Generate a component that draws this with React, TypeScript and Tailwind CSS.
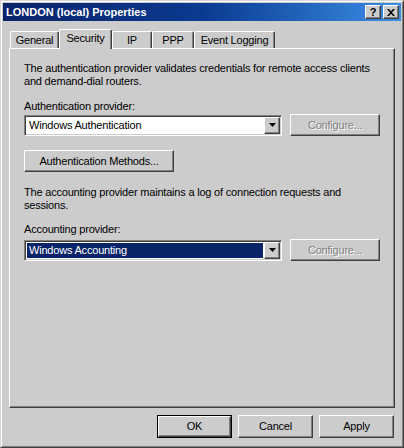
const face = "bg-[#cccccc]";

function Raised({
  children,
  className = "",
  disabled = false,
}: {
  children: React.ReactNode;
  className?: string;
  disabled?: boolean;
}) {
  return (
    <div
      className={`flex items-center justify-center border border-t-white border-l-white border-r-[#404040] border-b-[#404040] shadow-[inset_-1px_-1px_0_#808080] ${face} ${
        disabled
          ? "text-[#808080] [text-shadow:1px_1px_0_#ffffff]"
          : "text-black"
      } ${className}`}
    >
      {children}
    </div>
  );
}

function Combo({ value, selected = false }: { value: string; selected?: boolean }) {
  return (
    <div className="flex h-[21px] w-[259px] items-stretch border border-t-[#808080] border-l-[#808080] border-r-white border-b-white bg-white shadow-[inset_1px_1px_0_#404040,inset_-1px_-1px_0_#cccccc] p-[1px]">
      <div className="flex flex-1 items-center p-[1px]">
        <div
          className={`flex h-full flex-1 items-center pl-[2px] ${
            selected ? "bg-[#0a246a] text-white" : "text-black"
          }`}
        >
          {value}
        </div>
      </div>
      <Raised className="w-[16px]">
        <svg width="7" height="4" viewBox="0 0 7 4">
          <path d="M0 0h7L3.5 4z" fill="#000" />
        </svg>
      </Raised>
    </div>
  );
}

const tabs = [
  { label: "General", w: "w-[49px]" },
  { label: "Security", w: "w-[53px]", active: true },
  { label: "IP", w: "w-[40px]" },
  { label: "PPP", w: "w-[42px]" },
  { label: "Event Logging", w: "w-[81px]" },
];

export default function App() {
  return (
    <div
      className={`h-[448px] w-[404px] border border-t-[#d8d8d8] border-l-[#d8d8d8] border-r-[#404040] border-b-[#404040] ${face} text-[11px] leading-[13px] tracking-[-0.2px] text-black`}
      style={{ fontFamily: '"Liberation Sans", Arial, sans-serif' }}
    >
      <div className="flex h-full flex-col border border-t-white border-l-white border-r-[#808080] border-b-[#808080] p-[1px]">
        {/* Title bar */}
        <div className="flex h-[18px] items-center justify-between bg-gradient-to-r from-[#0a246a] via-[#0a3a90] to-[#3c8ee6] pl-[3px] pr-[2px]">
          <span className="font-bold tracking-normal text-white">LONDON (local) Properties</span>
          <div className="flex gap-[2px]">
            <Raised className="h-[14px] w-[16px] text-[11px] font-bold leading-none">?</Raised>
            <Raised className="h-[14px] w-[16px]">
              <svg width="8" height="7" viewBox="0 0 8 7">
                <path d="M0 0h2l2 2.3L6 0h2L5 3.5 8 7H6L4 4.7 2 7H0l3-3.5z" fill="#000" />
              </svg>
            </Raised>
          </div>
        </div>

        <div className="flex flex-1 flex-col px-[6px] pt-[8px]">
          {/* Tabs */}
          <div className="relative z-10 flex h-[19px] items-end pl-[1px]">
            {tabs.map((t) => (
              <div
                key={t.label}
                className={`flex ${t.w} items-center justify-center rounded-t-[2px] border-l border-t border-r border-l-white border-t-white border-r-[#404040] shadow-[inset_-1px_0_0_#808080] ${face} ${
                  t.active ? "-mb-px h-[20px] pb-[2px]" : "h-[17px] pt-[1px]"
                }`}
              >
                {t.label}
              </div>
            ))}
          </div>

          {/* Panel */}
          <div className="flex h-[360px] flex-col whitespace-nowrap border border-t-white border-l-white border-r-[#404040] border-b-[#404040] px-[14px] pt-[13px] shadow-[inset_-1px_-1px_0_#808080]">
            <p>
              The authentication provider validates credentials for remote access clients
              <br />
              and demand-dial routers.
            </p>
            <p className="mt-[12px]">Authentication provider:</p>
            <div className="mt-[1px] flex items-center gap-[8px]">
              <Combo value="Windows Authentication" />
              <Raised disabled className="h-[22px] w-[90px]">
                Configure...
              </Raised>
            </div>
            <Raised className="mt-[14px] h-[22px] w-[150px]">Authentication Methods...</Raised>

            <p className="mt-[14px]">
              The accounting provider maintains a log of connection requests and
              <br />
              sessions.
            </p>
            <p className="mt-[11px]">Accounting provider:</p>
            <div className="mt-[3px] flex items-center gap-[8px]">
              <Combo value="Windows Accounting" selected />
              <Raised disabled className="h-[22px] w-[90px]">
                Configure...
              </Raised>
            </div>
          </div>

          {/* Buttons */}
          <div className="mt-[7px] flex justify-end gap-[6px] pr-[1px]">
            <div className="border border-black">
              <Raised className="h-[21px] w-[73px]">OK</Raised>
            </div>
            <Raised className="h-[23px] w-[75px]">Cancel</Raised>
            <Raised className="h-[23px] w-[75px]">Apply</Raised>
          </div>
        </div>
      </div>
    </div>
  );
}
